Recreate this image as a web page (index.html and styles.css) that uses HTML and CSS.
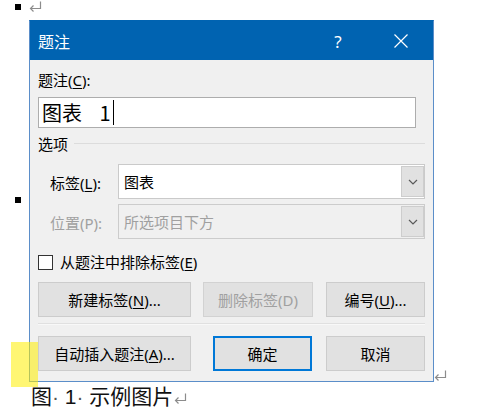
FILE: index.html
```html
<!DOCTYPE html>
<html lang="zh-CN">
<head>
<meta charset="utf-8">
<title>题注</title>
<link rel="stylesheet" href="styles.css">
</head>
<body>
<div class="doc">
  <div class="para first">
    <div class="gutter"><span class="mark"></span></div>
    <div class="content"><svg class="ret" width="13" height="11" viewBox="0 0 13 11"><path d="M11.5 0.5 V7.5 H1.5 M4.5 4.5 L1.5 7.5 L4.5 10.5" fill="none" stroke="#8c8c8c" stroke-width="1.2"/></svg></div>
  </div>
  <div class="para image">
    <div class="gutter"><span class="mark"></span></div>
    <div class="content picture"><svg class="ret endret" width="13" height="11" viewBox="0 0 13 11"><path d="M11.5 0.5 V7.5 H1.5 M4.5 4.5 L1.5 7.5 L4.5 10.5" fill="none" stroke="#8c8c8c" stroke-width="1.2"/></svg></div>
  </div>
  <div class="para caption">
    <div class="gutter"></div>
    <div class="content captext">图<span class="dot">·</span> 1<span class="dot">·</span> 示例图片<svg class="ret" width="13" height="11" viewBox="0 0 13 11"><path d="M11.5 0.5 V7.5 H1.5 M4.5 4.5 L1.5 7.5 L4.5 10.5" fill="none" stroke="#8c8c8c" stroke-width="1.2"/></svg></div>
  </div>
</div>

<div class="dialog">
  <div class="titlebar">
    <span class="title">题注</span>
    <span class="tbtn help">?</span>
    <span class="tbtn close"><svg width="14" height="14" viewBox="0 0 14 14"><path d="M0.5 0.5 L13.5 13.5 M13.5 0.5 L0.5 13.5" stroke="#fff" stroke-width="1.2" fill="none"/></svg></span>
  </div>
  <div class="dbody">
    <div class="lbl">题注(<u>C</u>):</div>
    <div class="textbox"><span class="tbtext">图表 1</span><span class="caret"></span></div>
    <div class="group-head"><span>选项</span></div>
    <div class="field f1">
      <span class="flabel">标签(<u>L</u>):</span>
      <div class="combo">
        <span class="val">图表</span>
        <span class="dd"><svg width="10" height="6" viewBox="0 0 10 6"><path d="M1 1 L5 5 L9 1" stroke="#5a5a5a" stroke-width="1.2" fill="none"/></svg></span>
      </div>
    </div>
    <div class="field f2 disabled">
      <span class="flabel">位置(P):</span>
      <div class="combo">
        <span class="val">所选项目下方</span>
        <span class="dd"><svg width="10" height="6" viewBox="0 0 10 6"><path d="M1 1 L5 5 L9 1" stroke="#5a5a5a" stroke-width="1.2" fill="none"/></svg></span>
      </div>
    </div>
    <div class="check"><span class="box"></span><span>从题注中排除标签(<u>E</u>)</span></div>
    <div class="btnrow r1">
      <span class="btn w153">新建标签(<u>N</u>)...</span>
      <span class="btn w110 dis">删除标签(D)</span>
      <span class="btn w99 last">编号(<u>U</u>)...</span>
    </div>
    <div class="sep"></div>
    <div class="btnrow r2">
      <span class="btn w153">自动插入题注(<u>A</u>)...</span>
      <span class="btn w99 def">确定</span>
      <span class="btn w99 last">取消</span>
    </div>
  </div>
</div>

<div class="highlight"></div>
</body>
</html>
```

FILE: styles.css
```css
html, body {
  margin: 0;
  padding: 0;
  background: #ffffff;
}
body {
  width: 481px;
  height: 418px;
  overflow: hidden;
  position: relative;
  font-family: "Noto Sans", "Noto Sans CJK SC", sans-serif;
}

/* document */
.doc {
  display: flex;
  flex-direction: column;
}
.para {
  display: flex;
}
.gutter {
  width: 29px;
  flex: none;
  display: flex;
  padding-left: 15px;
  box-sizing: border-box;
}
.mark {
  display: block;
  width: 6px;
  height: 6px;
  background: #000;
}
.first {
  height: 14px;
}
.first .gutter {
  padding-top: 4px;
}
.first .content {
  padding-top: 1px;
}
.ret {
  display: block;
}
.image {
  height: 372px;
}
.image .gutter {
  align-items: center;
}
.picture {
  width: 405px;
  display: flex;
  justify-content: flex-end;
  align-items: flex-end;
  position: relative;
}
.endret {
  position: relative;
  left: 13px;
  bottom: 5px;
}
.caption .gutter {
  width: 31px;
}
.captext {
  font-family: "Liberation Sans", "Noto Sans CJK SC", sans-serif;
  font-size: 21px;
  line-height: 22px;
  color: #111;
  display: flex;
  align-items: center;
  white-space: pre;
}
.captext .dot {
  color: #555;
}
.captext .ret {
  margin-left: 1px;
  margin-top: 3px;
}

/* dialog */
.dialog {
  position: absolute;
  left: 29px;
  top: 20px;
  width: 405px;
  height: 362px;
  box-sizing: border-box;
  border: 1px solid #5b8ec9;
  border-top-color: #0063b1;
  background: #f0f0f0;
  display: flex;
  flex-direction: column;
  z-index: 1;
}
.titlebar {
  height: 39px;
  background: #0063b1;
  color: #fff;
  display: flex;
  align-items: center;
  padding-left: 8px;
  padding-right: 9px;
  flex: none;
}
.title {
  flex: 1;
  font-size: 16px;
  line-height: 20px;
  padding-top: 2px;
}
.tbtn {
  width: 46px;
  height: 39px;
  display: flex;
  align-items: center;
  justify-content: center;
}
.help {
  font-size: 17px;
  margin-right: 17px;
  padding-top: 1px;
}
.dbody {
  padding: 10px 8px 10px 8px;
  font-size: 15px;
  line-height: 20px;
  color: #000;
}
u {
  text-decoration: underline;
  text-underline-offset: 2px;
}
.lbl {
  height: 20px;
}
.textbox {
  margin-top: 7px;
  height: 31px;
  width: 378px;
  box-sizing: border-box;
  border: 1px solid #adadad;
  background: #fff;
  display: flex;
  align-items: center;
  padding-left: 3px;
}
.tbtext {
  font-family: "Noto Sans CJK SC", sans-serif;
  font-size: 20px;
  line-height: 26px;
  word-spacing: 13px;
  white-space: pre;
}
.caret {
  display: block;
  width: 1px;
  height: 25px;
  background: #000;
  margin-left: 2px;
}
.group-head {
  margin-top: 6px;
  height: 20px;
  display: flex;
  align-items: center;
}
.group-head::after {
  content: "";
  flex: 1;
  height: 1px;
  background: #dcdcdc;
  margin-left: 6px;
  margin-top: -2px;
}
.field {
  display: flex;
  align-items: center;
  padding-left: 12px;
  height: 35px;
}
.f1 {
  margin-top: 10px;
}
.f2 {
  margin-top: 5px;
}
.flabel {
  width: 68px;
  flex: none;
  padding-top: 2px;
}
.combo {
  flex: 1;
  height: 35px;
  box-sizing: border-box;
  border: 1px solid #cacaca;
  background: #fff;
  display: flex;
  align-items: stretch;
}
.combo .val {
  flex: 1;
  display: flex;
  align-items: center;
  padding-left: 5px;
}
.dd {
  width: 23px;
  margin: 1px 0;
  box-sizing: border-box;
  background: #e1e1e1;
  border: 1px solid #cdcdcd;
  display: flex;
  align-items: center;
  justify-content: center;
}
.disabled .flabel,
.disabled .val {
  color: #a0a0a0;
}
.disabled .combo {
  background: #f0f0f0;
  border-color: #cccccc;
}
.check {
  margin-top: 13px;
  height: 20px;
  display: flex;
  align-items: center;
}
.box {
  width: 15px;
  height: 15px;
  box-sizing: border-box;
  border: 1px solid #333;
  background: #fff;
  margin-right: 7px;
}
.btnrow {
  display: flex;
  height: 35px;
}
.r1 {
  margin-top: 10px;
}
.r2 {
  margin-top: 11px;
}
.btn {
  height: 35px;
  box-sizing: border-box;
  background: #e1e1e1;
  border: 1px solid #cccccc;
  display: flex;
  align-items: center;
  justify-content: center;
}
.w153 { width: 153px; }
.w110 { width: 110px; }
.w99 { width: 99px; }
.r1 .w110 { margin-left: 12px; }
.r1 .last { margin-left: 13px; }
.r2 .def { margin-left: 22px; }
.r2 .last { margin-left: 14px; }
.btn.dis {
  color: #a0a0a0;
  border-color: #d2d2d2;
}
.btn.def {
  border: 2px solid #0078d7;
}
.sep {
  margin-top: 6px;
  height: 1px;
  border-top: 1px solid #e0e0e0;
  background: #f8f8f8;
}

.highlight {
  position: absolute;
  left: 11px;
  top: 342px;
  width: 27px;
  height: 45px;
  background: rgba(255, 238, 0, 0.55);
  z-index: 2;
}
```
